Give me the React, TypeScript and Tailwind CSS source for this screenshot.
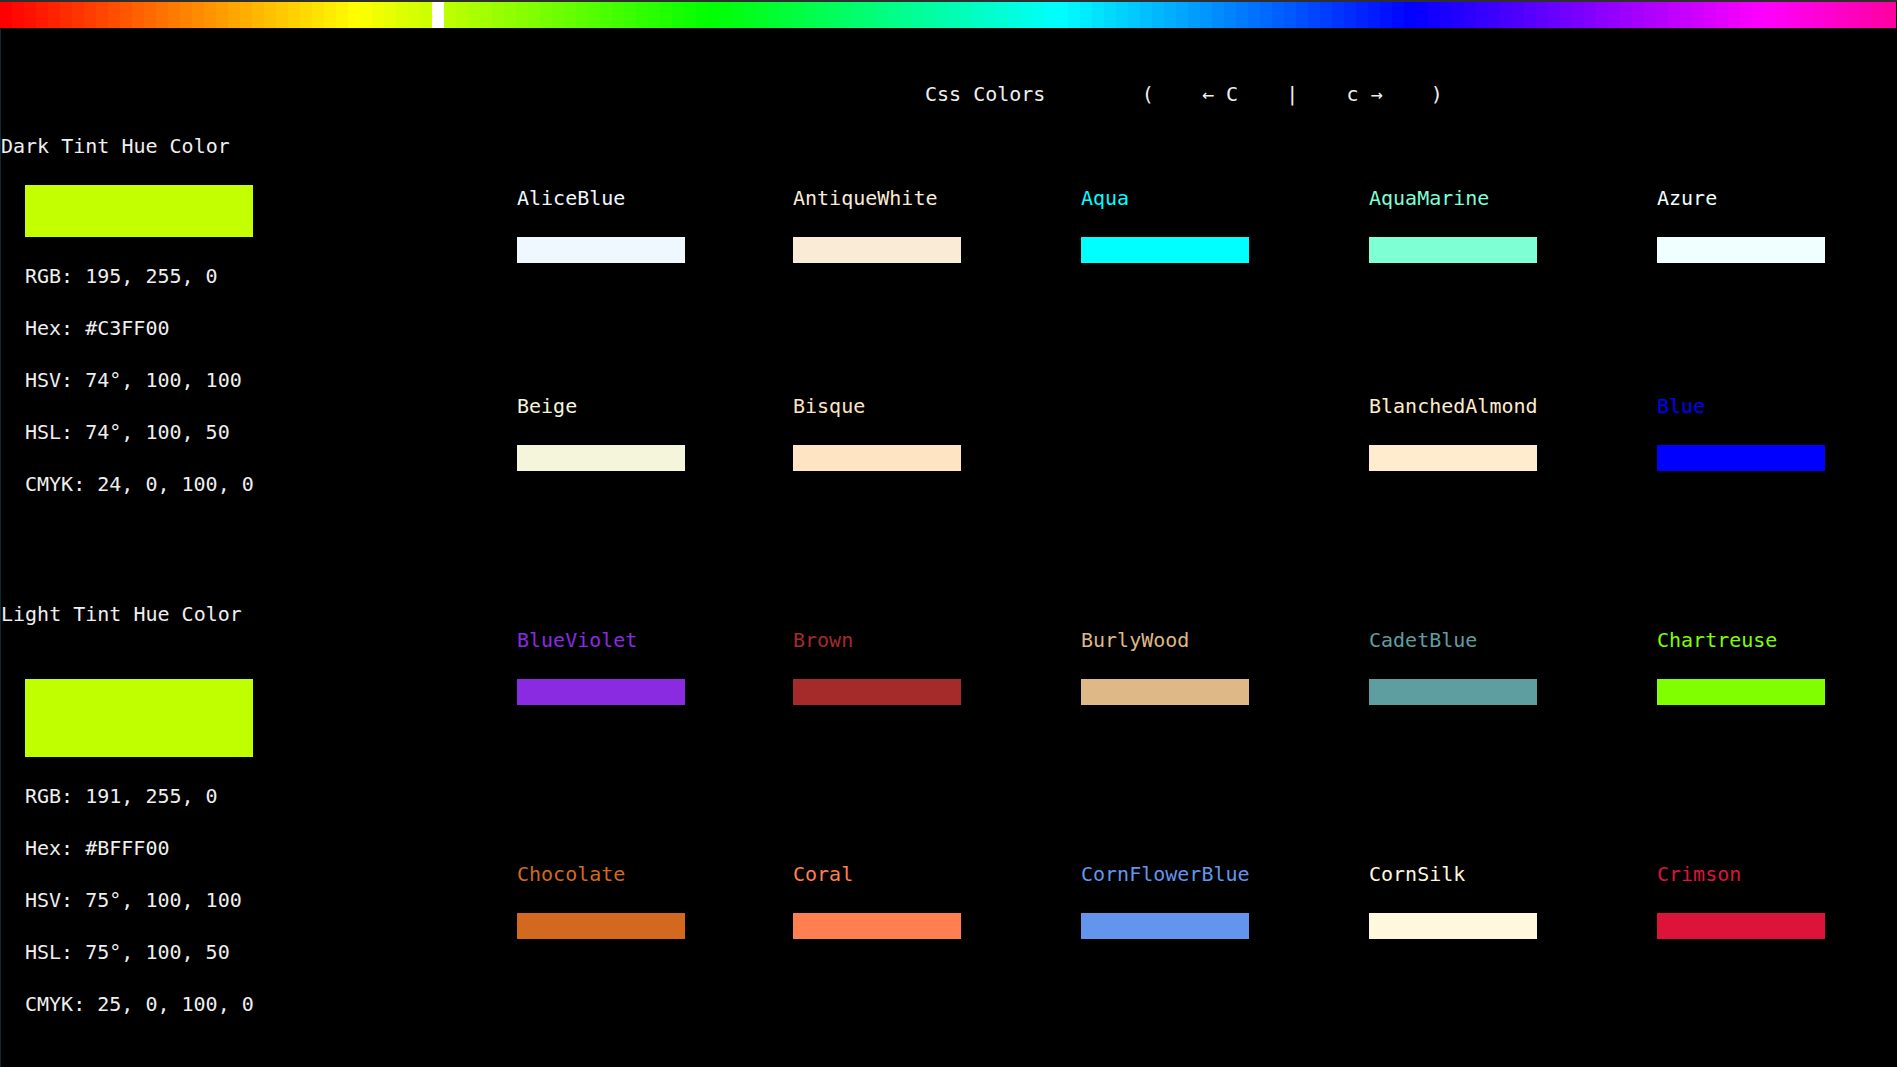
const BAR_CELLS = 158
const MARKER = 36

// hue strip across the top, one 12px cell per step
const hues = Array.from({ length: BAR_CELLS }, (_, i) => i * 2.05)

const rows: [string, string][][] = [
  [
    ['AliceBlue', '#F0F8FF'],
    ['AntiqueWhite', '#FAEBD7'],
    ['Aqua', '#00FFFF'],
    ['AquaMarine', '#7FFFD4'],
    ['Azure', '#F0FFFF'],
  ],
  [
    ['Beige', '#F5F5DC'],
    ['Bisque', '#FFE4C4'],
    ['Black', '#000000'],
    ['BlanchedAlmond', '#FFEBCD'],
    ['Blue', '#0000FF'],
  ],
  [
    ['BlueViolet', '#8A2BE2'],
    ['Brown', '#A52A2A'],
    ['BurlyWood', '#DEB887'],
    ['CadetBlue', '#5F9EA0'],
    ['Chartreuse', '#7FFF00'],
  ],
  [
    ['Chocolate', '#D2691E'],
    ['Coral', '#FF7F50'],
    ['CornFlowerBlue', '#6495ED'],
    ['CornSilk', '#FFF8DC'],
    ['Crimson', '#DC143C'],
  ],
]

const rowGaps = ['mt-[78px]', 'mt-[130px]', 'mt-[156px]', 'mt-[156px]']

function Readout({ lines }: { lines: string[] }) {
  return (
    <div className="flex flex-col pl-[24px]">
      {lines.map((l) => (
        <p key={l} className="mt-[26px] h-[26px] whitespace-pre">
          {l}
        </p>
      ))}
    </div>
  )
}

export default function App() {
  return (
    <div className="h-[1067px] w-full overflow-hidden bg-black border-t-2 border-[#2e2e2e] font-['DejaVu_Sans_Mono',monospace] text-[20px] leading-[26px] text-[#efefef]">
      <div className="flex h-[26px]">
        {hues.map((h, i) => (
          <div
            key={i}
            className="h-[26px] w-[12px] shrink-0"
            style={{ background: i === MARKER ? '#ffffff' : `hsl(${h}, 100%, 50%)` }}
          />
        ))}
      </div>
      <div className="h-px bg-[#1a0d08]" />

      <div className="flex h-full border-l border-[#0f2a36]">
        {/* tint panel */}
        <div className="w-[516px] shrink-0 pt-[104px]">
          <p className="h-[26px] whitespace-pre">Dark Tint Hue Color</p>
          <div className="ml-[24px] mt-[26px] h-[52px] w-[228px] bg-[#c3ff00]" />
          <Readout
            lines={['RGB: 195, 255, 0', 'Hex: #C3FF00', 'HSV: 74°, 100, 100', 'HSL: 74°, 100, 50', 'CMYK: 24, 0, 100, 0']}
          />

          <p className="mt-[104px] h-[26px] whitespace-pre">Light Tint Hue Color</p>
          <div className="ml-[24px] mt-[52px] h-[78px] w-[228px] bg-[#bfff00]" />
          <Readout
            lines={['RGB: 191, 255, 0', 'Hex: #BFFF00', 'HSV: 75°, 100, 100', 'HSL: 75°, 100, 50', 'CMYK: 25, 0, 100, 0']}
          />
        </div>

        {/* css colour grid */}
        <div className="flex-1 pt-[52px]">
          <p className="ml-[408px] h-[26px] whitespace-pre">
            {'Css Colors        (    ← C    |    c →    )'}
          </p>

          {rows.map((row, r) => (
            <div key={r} className={`${rowGaps[r]} grid grid-cols-[276px_288px_288px_288px_168px]`}>
              {row.map(([name, hex]) => (
                <div key={name}>
                  <p className="h-[26px] whitespace-pre" style={{ color: hex }}>
                    {name}
                  </p>
                  <div className="mt-[26px] h-[26px] w-[168px]" style={{ background: hex }} />
                </div>
              ))}
            </div>
          ))}
        </div>
      </div>
    </div>
  )
}
